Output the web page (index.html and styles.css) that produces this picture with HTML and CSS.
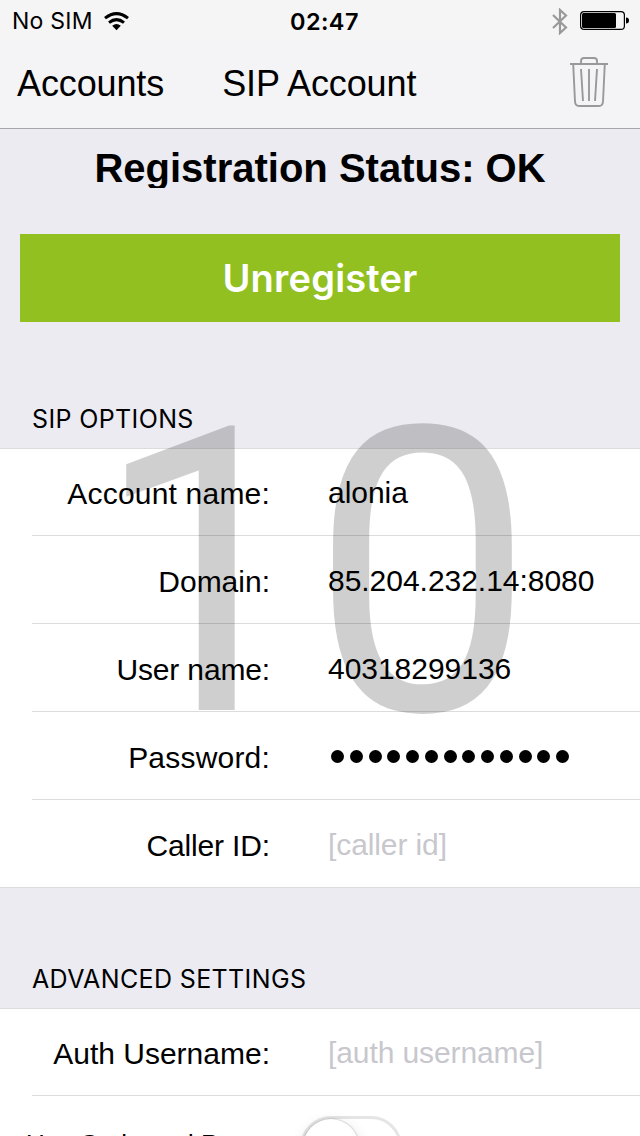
FILE: index.html
```html
<!DOCTYPE html>
<html lang="en">
<head>
<meta charset="utf-8">
<title>SIP Account</title>
<link rel="stylesheet" href="styles.css">
</head>
<body>
<main class="screen">
  <header class="top">
    <div class="status">
      <div class="carrier"><span>No SIM</span>
        <svg width="25" height="19" viewBox="0 0 25 19"><path d="M1 6.2Q12.500-3 24 6.200" fill="none" stroke="#000" stroke-width="3"/><path d="M5 10.600Q12.500 4.600 20 10.600" fill="none" stroke="#000" stroke-width="3"/><path d="M8.200 13.800Q12.500 10.200 16.800 13.800L12.500 18.300Z"/></svg>
      </div>
      <time class="clock">02:47</time>
      <div class="indicators">
        <svg width="16" height="27" viewBox="0 0 16 27"><path d="M1 7L14 19.500L8 25V2L14 7.500L1 20" fill="none" stroke="#999" stroke-width="2.200"/></svg>
        <svg width="50" height="20" viewBox="0 0 50 20"><rect x=".6" y=".6" width="43.800" height="17.800" rx="3.500" fill="none" stroke="#000" stroke-width="1.200"/><rect x="2" y="2" width="34" height="15" rx="1.500"/><path d="M46 6.500Q49 6.500 49 9.500T46 12.500Z"/></svg>
      </div>
    </div>
    <nav class="nav">
      <span class="back">Accounts</span>
      <span class="title">SIP Account</span>
      <svg class="trash" width="38" height="50" viewBox="0 0 38 50" fill="none" stroke="#999" stroke-width="1.900"><path d="M0 7H38M11 7V4Q11 1 14 1H24Q27 1 27 4V7M3.200 7L5 44.500Q5.300 49 9 49H29Q32.700 49 33 44.500L34.800 7M11 12L13 44M19 12V44M27 12L25 44"/></svg>
    </nav>
  </header>
  <h1 class="registration"><span>Registration Status: OK</span></h1>
  <button class="action"><span>Unregister</span></button>
  <h2 class="heading heading-sip"><span>SIP OPTIONS</span></h2>
  <section class="group">
    <div class="row"><label class="wide"><span>Account name:</span></label><div class="value"><span>alonia</span></div></div>
    <div class="row"><label><span>Domain:</span></label><div class="value"><span>85.204.232.14:8080</span></div></div>
    <div class="row"><label class="tight"><span>User name:</span></label><div class="value"><span>40318299136</span></div></div>
    <div class="row"><label class="wide"><span>Password:</span></label><div class="value dots"><i></i><i></i><i></i><i></i><i></i><i></i><i></i><i></i><i></i><i></i><i></i><i></i><i></i></div></div>
    <div class="row"><label class="tight"><span>Caller ID:</span></label><div class="value hint"><span>[caller id]</span></div></div>
  </section>
  <h2 class="heading heading-advanced"><span>ADVANCED SETTINGS</span></h2>
  <section class="group">
    <div class="row"><label><span>Auth Username:</span></label><div class="value hint"><span>[auth username]</span></div></div>
    <div class="row"><label class="compact"><span>Use Outbound Proxy:</span></label><div class="switch"><div class="knob"></div></div></div>
  </section>
  <div class="counter">10</div>
</main>
</body>
</html>
```
FILE: styles.css
```css
* { box-sizing: border-box; }
body { margin: 0; font-family: "Liberation Sans", Arial, sans-serif; color: #000; }
svg { display: block; }
.screen { position: relative; width: 640px; height: 1136px; overflow: hidden; background: #ebebf1; }
.top { height: 129px; background: #f4f4f6; border-bottom: 1px solid #a5a5ad; }
.status { height: 40px; display: grid; grid-template-columns: 1fr 60px 1fr; align-items: center; padding: 1px 12px 0; background: #f5f5f5; font-family: Inter, sans-serif; }
.carrier { display: flex; align-items: center; gap: 11px; font-size: 23px; line-height: 39px; letter-spacing: .25px; }
.carrier span { padding-top: 1px; }
.clock { font-size: 23.500px; font-weight: 600; line-height: 39px; letter-spacing: .4px; white-space: nowrap; }
.indicators { display: flex; justify-content: flex-end; align-items: center; gap: 12px; margin-right: -2px; }
.nav { height: 88px; display: flex; align-items: center; padding: 0 32px 0 18px; font-size: 36px; line-height: 40px; letter-spacing: -.12px; }
.back { margin-left: -1px; }
.title { margin-left: 58px; }
.trash { margin-left: auto; margin-top: -4px; }
.registration { margin: 0; height: 105px; padding-top: 19px; text-align: center; font-size: 40px; line-height: 40px; }
.registration span { display: inline-block; height: 40px; overflow: hidden; }
.action { display: block; width: 600px; height: 88px; margin: 0 20px; padding: 0; border: 0; background: #92c020; color: #fff; font: 600 38px/88px Inter, sans-serif; letter-spacing: .2px; }
.heading { margin: 0; padding: 0 0 15px 32px; display: flex; align-items: flex-end; font: 400 25px/27px Inter, sans-serif; letter-spacing: .37px; }
.heading-sip { height: 126px; }
.heading-advanced { height: 120px; }
.group { background: #fff; border-top: 1px solid #dcdcde; }
.row { display: grid; grid-template-columns: 238px 1fr; column-gap: 58px; height: 88px; margin-left: 32px; border-bottom: 1px solid #dcdcde; font-size: 30px; line-height: 34px; }
.row:first-child { height: 87px; }
.row:nth-child(5) { margin-left: 0; padding-left: 32px; }
.row label { align-self: end; height: 58px; text-align: right; white-space: nowrap; }
.row .wide { letter-spacing: .2px; }
.row .tight { letter-spacing: -.15px; }
.value { align-self: end; height: 59px; letter-spacing: -.03px; }
.hint { color: #c7c7cd; letter-spacing: -.1px; }
.dots { display: flex; gap: 5.750px; padding: 10px 0 0 3px; }
.dots i { width: 13px; height: 13px; border-radius: 50%; background: #000; flex: none; }
.row .compact { align-self: start; text-align: left; font-size: 26px; margin: 31px 0 0 -6px; }
.switch { width: 102px; height: 62px; margin: 20px 0 0 -28px; border: 3px solid #e5e5e5; border-radius: 31px; }
.knob { width: 56px; height: 56px; border-radius: 50%; background: #fff; box-shadow: 0 0 2px rgba(0,0,0,.35), 0 6px 16px rgba(0,0,0,.15); }
.counter { position: absolute; left: 93px; top: 337px; font: 400 398px/474px Roboto, sans-serif; letter-spacing: -6px; color: rgba(0,0,0,.19); pointer-events: none; }
```
